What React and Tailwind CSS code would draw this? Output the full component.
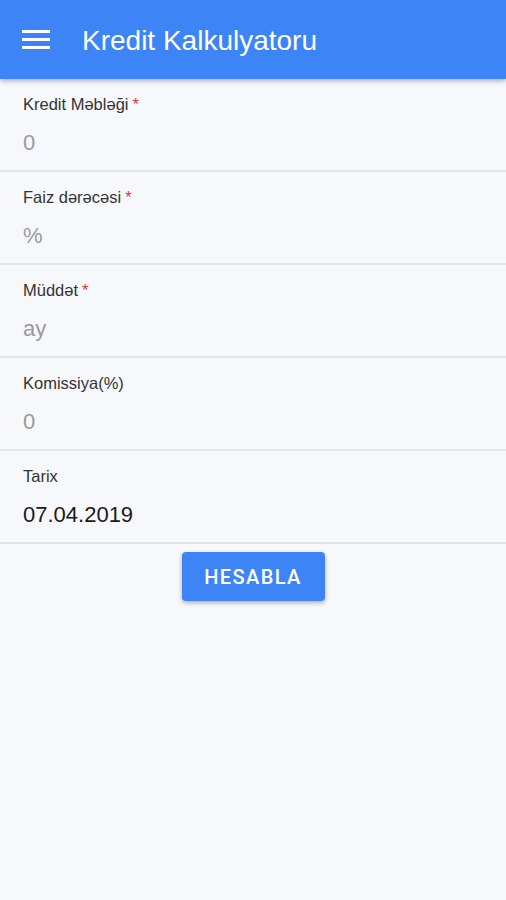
const fields = [
  { label: 'Kredit Məbləği', required: true, value: '0', placeholder: true },
  { label: 'Faiz dərəcəsi', required: true, value: '%', placeholder: true },
  { label: 'Müddət', required: true, value: 'ay', placeholder: true },
  { label: 'Komissiya(%)', required: false, value: '0', placeholder: true },
  { label: 'Tarix', required: false, value: '07.04.2019', placeholder: false },
]

export default function App() {
  return (
    <div className="min-h-[900px] bg-[#f7f8fc] font-['Liberation_Sans',Arial,sans-serif]">
      {/* App bar */}
      <div className="relative z-10 h-[79px] bg-[#3d84f7] flex items-center shadow-[0_2px_5px_rgba(0,0,0,0.3)]">
        <div className="ml-[22px] w-[28px] flex flex-col gap-[5px]">
          <div className="h-[3px] bg-white"></div>
          <div className="h-[3px] bg-white"></div>
          <div className="h-[3px] bg-white"></div>
        </div>
        <h1 className="ml-[32px] pt-[2px] text-white text-[28px] leading-[32px]">Kredit Kalkulyatoru</h1>
      </div>

      {fields.map((f) => (
        <div key={f.label} className="h-[93px] border-b-2 border-[#e3e4e8] pl-[23px] pt-[15px]">
          <div className="text-[16.5px] leading-[20px] text-[#333]">
            {f.label}
            {f.required && <span className="text-[#e53935] ml-[4px]">*</span>}
          </div>
          <div className={`mt-[15px] text-[22px] leading-[28px] ${f.placeholder ? 'text-[#9a9a9a]' : 'text-[#1a1a1a]'}`}>
            {f.value}
          </div>
        </div>
      ))}

      <div className="flex justify-center pt-[8px]">
        <button className="w-[143px] h-[49px] rounded-[4px] bg-[#3d84f7] text-white font-['Roboto',sans-serif] text-[20px] font-medium tracking-[0.07em] shadow-[0_2px_4px_rgba(0,0,0,0.3)]">
          HESABLA
        </button>
      </div>
    </div>
  )
}
